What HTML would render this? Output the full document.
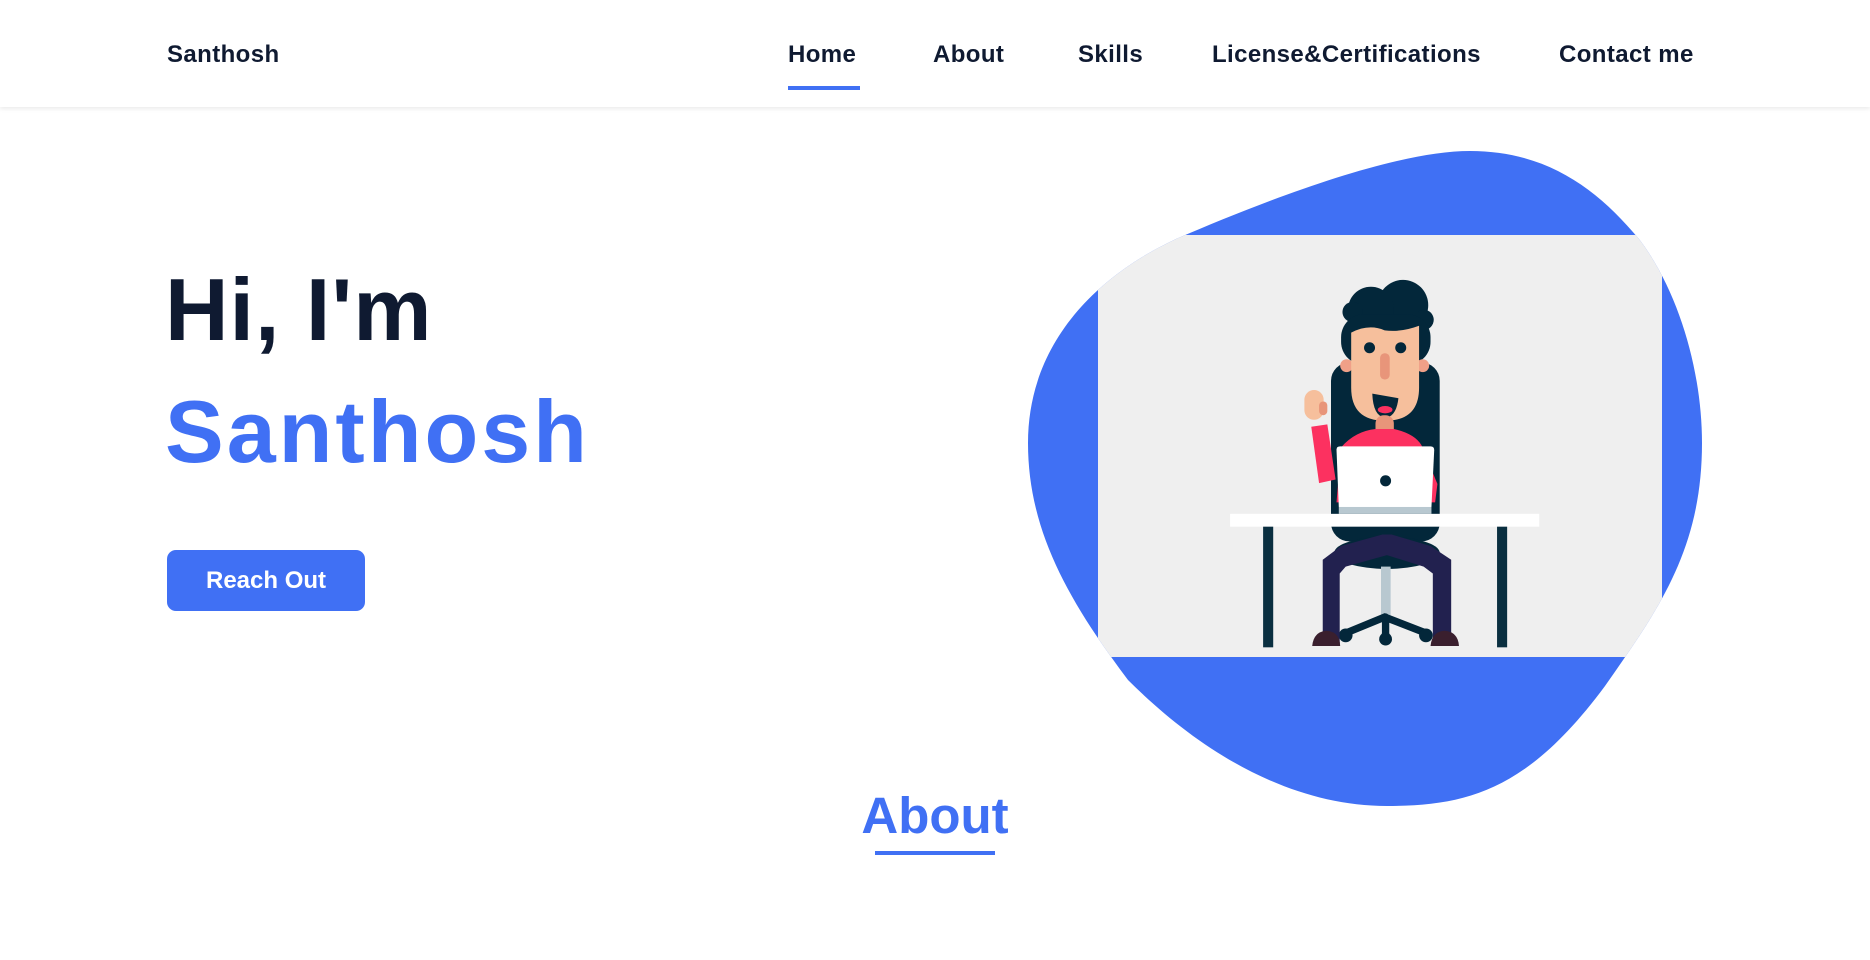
<!DOCTYPE html>
<html><head><meta charset="utf-8"><style>
*{margin:0;padding:0;box-sizing:border-box}
body{width:1870px;height:960px;background:#fff;font-family:"Liberation Sans",sans-serif;position:relative;overflow:hidden;color:#0f1a31}
.nav{position:absolute;left:0;top:0;width:1870px;height:107px;background:#fff;box-shadow:0 2px 4px rgba(0,0,0,.08)}
.nav span{position:absolute;top:41px;font-size:24px;font-weight:bold;color:#0f1a31;white-space:nowrap;letter-spacing:0.4px}
.ul{position:absolute;left:788px;top:86px;width:72px;height:4px;background:#4070f4}
.h1{position:absolute;left:165px;font-size:88px;font-weight:bold;line-height:1;white-space:nowrap}
.btn{position:absolute;left:167px;top:550px;width:198px;height:61px;background:#4070f4;border-radius:9px;color:#fff;font-size:24px;font-weight:bold;text-align:center;line-height:61px}
.ab{position:absolute;left:0;width:1870px;text-align:center;top:786px;font-size:51px;font-weight:bold;color:#4070f4}
.abl{position:absolute;left:875px;top:851px;width:120px;height:4px;background:#4070f4}
</style></head><body>
<div class="nav">
<span style="left:167px">Santhosh</span>
<span style="left:788px">Home</span>
<span style="left:933px">About</span>
<span style="left:1078px">Skills</span>
<span style="left:1212px">License&amp;Certifications</span>
<span style="left:1559px">Contact me</span>
<div class="ul"></div>
</div>
<div class="h1" style="top:266px;letter-spacing:1px">Hi, I'm</div>
<div class="h1" style="top:388px;color:#4070f4;letter-spacing:3px">Santhosh</div>
<div class="btn">Reach Out</div>
<svg style="position:absolute;left:1028px;top:150px" width="680" height="660" viewBox="0 0 680 660">
<defs><clipPath id="c"><path d="M442,1 C520,1 570,40 611,89 C650,140 674,220 674,293 C674,400 630,460 577,536 C500,640 440,656 359,656 C260,656 170,600 100,530 C40,450 0,380 0,293 C0,200 60,130 148,89 C250,45 370,1 442,1 Z"/></clipPath></defs>
<g clip-path="url(#c)">
<rect width="680" height="660" fill="#4070f4"/>
<rect x="70" y="85" width="564" height="422" fill="#efefef"/>
<g transform="translate(-8,-10) scale(0.4587)">
<rect x="678" y="485" width="237" height="390" rx="40" fill="#03273a"/>
<ellipse cx="800" cy="900" rx="115" ry="35" fill="#03273a"/>
<circle cx="835" cy="360" r="55" fill="#03273a"/><circle cx="765" cy="370" r="50" fill="#03273a"/>
<circle cx="725" cy="375" r="22" fill="#03273a"/><circle cx="880" cy="392" r="22" fill="#03273a"/>
<rect x="700" y="380" width="195" height="110" rx="50" fill="#03273a"/>
<circle cx="712" cy="492" r="14" fill="#f0a088"/><circle cx="878" cy="492" r="14" fill="#f0a088"/>
<path d="M722,420 Q760,400 795,415 Q830,420 870,405 L870,540 Q870,612 796,612 Q722,612 722,540Z" fill="#f6bf9c"/>
<circle cx="762" cy="453" r="12" fill="#03273a"/><circle cx="830" cy="453" r="12" fill="#03273a"/>
<rect x="785" y="465" width="21" height="57" rx="10" fill="#e8957a"/>
<path d="M768,553 L825,563 Q820,605 795,605 Q770,602 768,553Z" fill="#03273a"/>
<ellipse cx="796" cy="588" rx="16" ry="8" fill="#fc3160"/>
<rect x="775" y="600" width="40" height="65" rx="18" fill="#e8957a"/>
<path d="M700,670 Q730,635 775,630 L815,630 Q860,640 875,665 L910,750 L905,790 L690,790Z" fill="#fc3160"/>
<path d="M635,625 L670,620 L688,740 L652,748Z" fill="#fc3160"/>
<rect x="620" y="545" width="42" height="65" rx="21" fill="#f6bf9c"/>
<rect x="652" y="570" width="18" height="30" rx="9" fill="#e8957a"/>
<path d="M690,675 Q690,668 698,668 L895,668 Q903,668 903,676 L897,800 L695,800Z" fill="#fff"/>
<rect x="695" y="800" width="202" height="15" fill="#b8c8d0"/>
<circle cx="797" cy="743" r="12" fill="#03273a"/>
<rect x="458" y="815" width="674" height="28" fill="#fff"/>
<rect x="530" y="843" width="22" height="263" fill="#0a2f40"/><rect x="1040" y="843" width="22" height="263" fill="#0a2f40"/>
<rect x="787" y="930" width="21" height="110" fill="#b8c8d0"/>
<path d="M710,1075 L795,1040 L885,1075 M797,1040 L797,1088" stroke="#03273a" stroke-width="16" fill="none" stroke-linecap="round"/>
<circle cx="710" cy="1080" r="15" fill="#03273a"/><circle cx="797" cy="1088" r="14" fill="#03273a"/><circle cx="885" cy="1080" r="15" fill="#03273a"/>
<path d="M660,915 L700,885 L790,860 L810,860 L895,885 L940,915 L940,1100 L900,1100 L900,945 L880,930 L800,905 L710,930 L697,945 L697,1100 L660,1100Z" fill="#22214f"/>
<path d="M637,1103 Q640,1072 668,1070 Q697,1072 698,1103Z" fill="#3a1f2e"/>
<path d="M895,1103 Q898,1072 925,1070 Q955,1072 957,1103Z" fill="#3a1f2e"/>
</g>
</g>
</svg>
<div class="ab">About</div>
<div class="abl"></div>
</body></html>
